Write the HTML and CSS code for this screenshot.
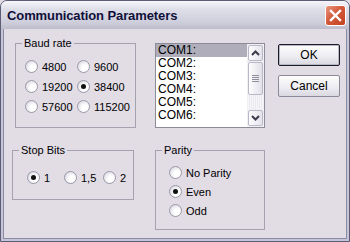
FILE: index.html
```html
<!DOCTYPE html>
<html lang="en">
<head>
  <meta charset="UTF-8" />
  <title>Communication Parameters</title>
  <link rel="stylesheet" href="styles.css">
</head>
<body>

  <div class="window">
    <div class="titlebar">
      <span class="title">Communication Parameters</span>
      <button class="close" aria-label="Close">
        <svg width="13" height="13" viewBox="0 0 13 13">
          <path d="M2 2 L11 11 M11 2 L2 11" stroke="#fff" stroke-width="2.4" stroke-linecap="square" fill="none"/>
        </svg>
      </button>
    </div>

    <div class="client">
      <div class="row row-top">
        <fieldset class="group baud">
          <legend>Baud rate</legend>
          <div class="baud-grid">
            <label class="radio"><span class="dot"></span>4800</label>
            <label class="radio"><span class="dot"></span>9600</label>
            <label class="radio"><span class="dot"></span>19200</label>
            <label class="radio"><span class="dot checked"></span>38400</label>
            <label class="radio"><span class="dot"></span>57600</label>
            <label class="radio"><span class="dot"></span>115200</label>
          </div>
        </fieldset>

        <div class="listbox">
          <ul class="items">
            <li class="selected">COM1:</li>
            <li>COM2:</li>
            <li>COM3:</li>
            <li>COM4:</li>
            <li>COM5:</li>
            <li>COM6:</li>
          </ul>
          <div class="scrollbar">
            <div class="sb-btn">
              <svg width="9" height="6" viewBox="0 0 9 6"><path d="M1 5 L4.5 1.5 L8 5" stroke="#3c3c4c" stroke-width="2" fill="none"/></svg>
            </div>
            <div class="sb-thumb"><span class="grip"></span></div>
            <div class="sb-track"></div>
            <div class="sb-btn">
              <svg width="9" height="6" viewBox="0 0 9 6"><path d="M1 1 L4.5 4.5 L8 1" stroke="#3c3c4c" stroke-width="2" fill="none"/></svg>
            </div>
          </div>
        </div>

        <div class="buttons">
          <button class="btn default">OK</button>
          <button class="btn">Cancel</button>
        </div>
      </div>

      <div class="row row-bottom">
        <fieldset class="group stop">
          <legend>Stop Bits</legend>
          <div class="stop-row">
            <label class="radio"><span class="dot checked"></span>1</label>
            <label class="radio"><span class="dot"></span>1,5</label>
            <label class="radio"><span class="dot"></span>2</label>
          </div>
        </fieldset>

        <fieldset class="group parity">
          <legend>Parity</legend>
          <div class="parity-col">
            <label class="radio"><span class="dot"></span>No Parity</label>
            <label class="radio"><span class="dot checked"></span>Even</label>
            <label class="radio"><span class="dot"></span>Odd</label>
          </div>
        </fieldset>
      </div>
    </div>
  </div>

</body>
</html>
```

FILE: styles.css
```css
* {
  margin: 0;
  padding: 0;
  box-sizing: border-box;
}

body {
  font-family: "Liberation Sans", Arial, sans-serif;
  font-size: 11px;
  color: #000;
  background: #e2dce5;
}

/* Window frame */
.window {
  width: 350px;
  height: 242px;
  background: #c6c5d7;
  border: 1px solid #5c5c74;
  border-radius: 7px 7px 0 0;
  display: flex;
  flex-direction: column;
  overflow: hidden;
}

.titlebar {
  height: 28px;
  display: flex;
  align-items: center;
  justify-content: space-between;
  padding: 0 3px 0 6px;
  background: linear-gradient(#f6f6fa, #dedee8 30%, #cfcfdc 75%, #bdbdcd);
}

.title {
  font-weight: bold;
  font-size: 13px;
  color: #10103a;
  letter-spacing: -0.1px;
}

.close {
  width: 21px;
  height: 21px;
  border: 1px solid #fff;
  border-radius: 3px;
  background: linear-gradient(135deg, #e9977f, #d45a3c 45%, #c0401f);
  display: flex;
  align-items: center;
  justify-content: center;
  margin-top: 1px;
}

.client {
  flex: 1;
  margin: 0 2px 2px;
  border: 1px solid #8a8aa2;
  border-top: none;
  background: #e2dce5;
  padding-top: 8px;
}

.row {
  display: flex;
  align-items: flex-start;
}

.row-bottom {
  margin-top: 16px;
}

/* Group boxes */
.group {
  border: 1px solid #a3a2ae;
  padding: 0;
}

.group legend {
  margin-left: 6px;
  padding: 0 2px;
  height: 12px;
  line-height: 12px;
}

.baud {
  margin-left: 11px;
  width: 121px;
  height: 91px;
}

.baud-grid {
  display: grid;
  grid-template-columns: 52px auto;
  grid-auto-rows: 20px;
  padding: 11px 0 0 9px;
}

.stop {
  margin-left: 8px;
  width: 122px;
  height: 56px;
}

.stop-row {
  display: grid;
  grid-template-columns: 37px 39px auto;
  padding: 15px 0 0 14px;
}

.parity {
  margin-left: 21px;
  width: 110px;
  height: 86px;
}

.parity-col {
  display: grid;
  grid-auto-rows: 19px;
  padding: 10px 0 0 13px;
}

/* Radio buttons */
.radio {
  display: flex;
  align-items: center;
  gap: 4px;
  height: 13px;
}

.dot {
  width: 13px;
  height: 13px;
  border-radius: 50%;
  border: 1px solid #9a99a8;
  background: radial-gradient(circle at 65% 65%, #fff 30%, #e4e3ea 70%, #c9c8d3);
  display: flex;
  align-items: center;
  justify-content: center;
}

.dot.checked::after {
  content: "";
  width: 5px;
  height: 5px;
  border-radius: 50%;
  background: #111;
}

/* List box */
.listbox {
  margin: 6px 0 0 19px;
  width: 110px;
  height: 85px;
  border: 1px solid #8c8b98;
  background: #fff;
  display: flex;
}

.items {
  list-style: none;
  flex: 1;
}

.items li {
  height: 13px;
  line-height: 13px;
  padding-left: 2px;
  font-size: 12px;
}

.items li.selected {
  background: #aeadb9;
}

.scrollbar {
  width: 17px;
  display: flex;
  flex-direction: column;
  padding: 1px;
  background: #f1f0f4;
}

.sb-btn {
  height: 16px;
  border: 1px solid #b9b8c6;
  border-radius: 2px;
  background: linear-gradient(90deg, #fdfdfe, #e4e3ec);
  display: flex;
  align-items: center;
  justify-content: center;
}

.sb-thumb {
  height: 33px;
  margin-top: 1px;
  border: 1px solid #b9b8c6;
  border-radius: 2px;
  background: linear-gradient(90deg, #fdfdfe, #e1e0e9);
  display: flex;
  align-items: center;
  justify-content: center;
}

.grip {
  width: 7px;
  height: 7px;
  background: repeating-linear-gradient(#8f8e9c 0 1px, transparent 1px 2px);
}

.sb-track {
  flex: 1;
  background: repeating-linear-gradient(90deg, #f6f6f9 0 1px, #eceaf1 1px 2px);
}

/* Buttons */
.buttons {
  margin: 7px 0 0 13px;
  display: flex;
  flex-direction: column;
  gap: 9px;
}

.btn {
  width: 62px;
  height: 22px;
  font-family: "Liberation Sans", Arial, sans-serif;
  font-size: 12px;
  color: #000;
  border: 1px solid #8b8a98;
  border-radius: 2px;
  background: linear-gradient(#fdfdfd, #ecebf0 60%, #d9d8e0);
}

.btn.default {
  border-color: #1c1c28;
  box-shadow: inset 0 0 0 1px #b7b6c4;
}
```
